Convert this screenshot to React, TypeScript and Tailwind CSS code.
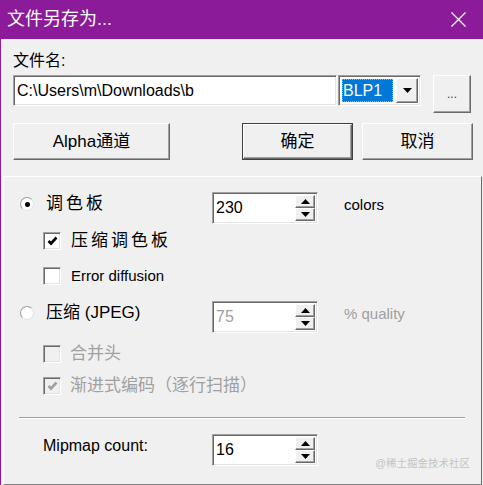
import React from "react";

const raised =
  "border border-t-white border-l-white border-r-[#696969] border-b-[#696969] shadow-[inset_-1px_-1px_0_#a0a0a0]";
const sunken =
  "border border-t-[#a0a0a0] border-l-[#a0a0a0] border-r-white border-b-white shadow-[inset_1px_1px_0_#696969,inset_-1px_-1px_0_#e3e3e3]";

function Triangle({ up, color = "#000" }: { up?: boolean; color?: string }) {
  return (
    <svg width="9" height="5" viewBox="0 0 9 5">
      {up ? (
        <path d="M0 5 L4.5 0 L9 5 Z" fill={color} />
      ) : (
        <path d="M0 0 L9 0 L4.5 5 Z" fill={color} />
      )}
    </svg>
  );
}

function Spin({ value, disabled }: { value: string; disabled?: boolean }) {
  return (
    <div className={`w-[106px] h-[32px] bg-white flex ${sunken}`}>
      <div
        className={`flex-1 flex items-center pl-[3px] text-[16px] ${
          disabled ? "text-[#a0a0a0]" : "text-black"
        }`}
      >
        {value}
      </div>
      <div className="w-[22px] flex flex-col py-[2px] pr-[2px]">
        <div className={`flex-1 flex items-center justify-center bg-[#f0f0f0] ${raised}`}>
          <Triangle up />
        </div>
        <div className={`flex-1 flex items-center justify-center bg-[#f0f0f0] ${raised}`}>
          <Triangle />
        </div>
      </div>
    </div>
  );
}

function Radio({ checked }: { checked?: boolean }) {
  return (
    <div className="w-[14px] h-[14px] rounded-full bg-white border border-[#a0a0a0] border-r-[#e3e3e3] border-b-[#e3e3e3] flex items-center justify-center shrink-0">
      {checked && <div className="w-[5px] h-[5px] rounded-full bg-black" />}
    </div>
  );
}

function Check({ checked, disabled }: { checked?: boolean; disabled?: boolean }) {
  return (
    <div
      className={`w-[18px] h-[18px] flex items-center justify-center shrink-0 ${sunken} ${
        disabled ? "bg-[#f0f0f0]" : "bg-white"
      }`}
    >
      {checked && (
        <svg width="11" height="10" viewBox="0 0 11 10">
          <path
            d="M1.5 5 L4 7.5 L9.5 1.5"
            stroke={disabled ? "#a0a0a0" : "#000"}
            strokeWidth="2.6"
            fill="none"
          />
        </svg>
      )}
    </div>
  );
}

function Button({ label, w, isDefault }: { label: string; w: string; isDefault?: boolean }) {
  return (
    <div
      className={`${w} h-[37px] ${
        isDefault ? "border border-[#404040]" : ""
      } flex shrink-0`}
    >
      <div
        className={`flex-1 flex items-center justify-center text-[17px] bg-[#f0f0f0] ${raised}`}
      >
        {label}
      </div>
    </div>
  );
}

export default function App() {
  return (
    <div className="relative w-[483px] h-[485px] overflow-hidden bg-[#f0f0f0] border-l border-[#8b1b98] flex flex-col font-['Liberation_Sans','Noto_Sans_CJK_SC',sans-serif] text-black">
      {/* Title bar */}
      <div className="h-[39px] shrink-0 bg-[#8b1b98] flex items-center justify-between pl-[6px] pr-[17px] text-white">
        <span className="text-[18px]">文件另存为...</span>
        <svg width="15" height="15" viewBox="0 0 15 15">
          <path d="M0.5 0.5 L14.5 14.5 M14.5 0.5 L0.5 14.5" stroke="white" strokeWidth="1.3" />
        </svg>
      </div>

      <div className="pl-[12px]">
        <div className="mt-[11px] text-[16px] leading-[22px]">文件名:</div>
        <div className="mt-[3px] flex items-start">
          <div className={`w-[324px] h-[31px] bg-white flex items-center pl-[3px] text-[16px] ${sunken}`}>
            C:\Users\m\Downloads\b
          </div>
          <div className={`ml-[1px] w-[83px] h-[31px] bg-white flex items-center pl-[3px] pr-[2px] ${sunken}`}>
            <div className="w-[51px] h-[23px] bg-[#0078d7] outline outline-1 outline-dotted outline-[#e8a060] -outline-offset-1 text-white text-[16px] flex items-center pl-[1px]">
              BLP1
            </div>
            <div className={`ml-auto w-[22px] h-[25px] bg-[#f0f0f0] flex items-center justify-center ${raised}`}>
              <Triangle />
            </div>
          </div>
          <div className={`ml-[12px] w-[38px] h-[38px] bg-[#f0f0f0] flex items-center justify-center text-[12px] text-[#404040] ${raised}`}>
            ...
          </div>
        </div>

        <div className="mt-[10px] flex">
          <Button label="Alpha通道" w="w-[157px]" />
          <div className="ml-[72px]">
            <Button label="确定" w="w-[111px]" isDefault />
          </div>
          <div className="ml-[9px]">
            <Button label="取消" w="w-[111px]" />
          </div>
        </div>
      </div>

      {/* Options panel */}
      <div className="mt-[16px] ml-[2px] w-[479px] flex-1 border border-t-white border-l-white border-r-[#696969] border-b-[#808080] pl-[16px] flex flex-col">
        <div className="mt-[15px] flex items-start">
          <div className="w-[192px] h-[24px] flex items-center">
            <Radio checked />
            <span className="ml-[12px] text-[17px] tracking-[3px]">调色板</span>
          </div>
          <Spin value="230" />
          <span className="ml-[26px] mt-[2px] text-[15px]">colors</span>
        </div>

        <div className="mt-[4px] h-[26px] flex items-center pl-[23px]">
          <Check checked />
          <span className="ml-[10px] text-[17px] tracking-[3px]">压缩调色板</span>
        </div>
        <div className="mt-[9px] h-[26px] flex items-center pl-[23px]">
          <Check />
          <span className="ml-[10px] text-[15px]">Error diffusion</span>
        </div>

        <div className="mt-[12px] flex items-start">
          <div className="w-[192px] h-[24px] flex items-center">
            <Radio />
            <span className="ml-[12px] text-[17px]">压缩 (JPEG)</span>
          </div>
          <Spin value="75" disabled />
          <span className="ml-[26px] mt-[2px] text-[15px] text-[#a0a0a0]">% quality</span>
        </div>

        <div className="mt-[8px] h-[26px] flex items-center pl-[23px] text-[#a0a0a0]">
          <Check disabled />
          <span className="ml-[9px] text-[17px]">合并头</span>
        </div>
        <div className="mt-[6px] h-[26px] flex items-center pl-[23px] text-[#a0a0a0]">
          <Check checked disabled />
          <span className="ml-[9px] text-[17px]">渐进式编码（逐行扫描）</span>
        </div>

        <div className="mt-[18px] -ml-[1px] w-[446px] h-[2px] border-t border-t-[#a0a0a0] border-b border-b-white" />

        <div className="mt-[15px] flex items-start">
          <div className="w-[192px] h-[24px] flex items-center pl-[23px]">
            <span className="text-[16px]">Mipmap count:</span>
          </div>
          <Spin value="16" />
        </div>
      </div>

      <div className="absolute right-[13px] bottom-[13px] text-[10.5px] text-[#c4c4c4]">
        @稀土掘金技术社区
      </div>
    </div>
  );
}
